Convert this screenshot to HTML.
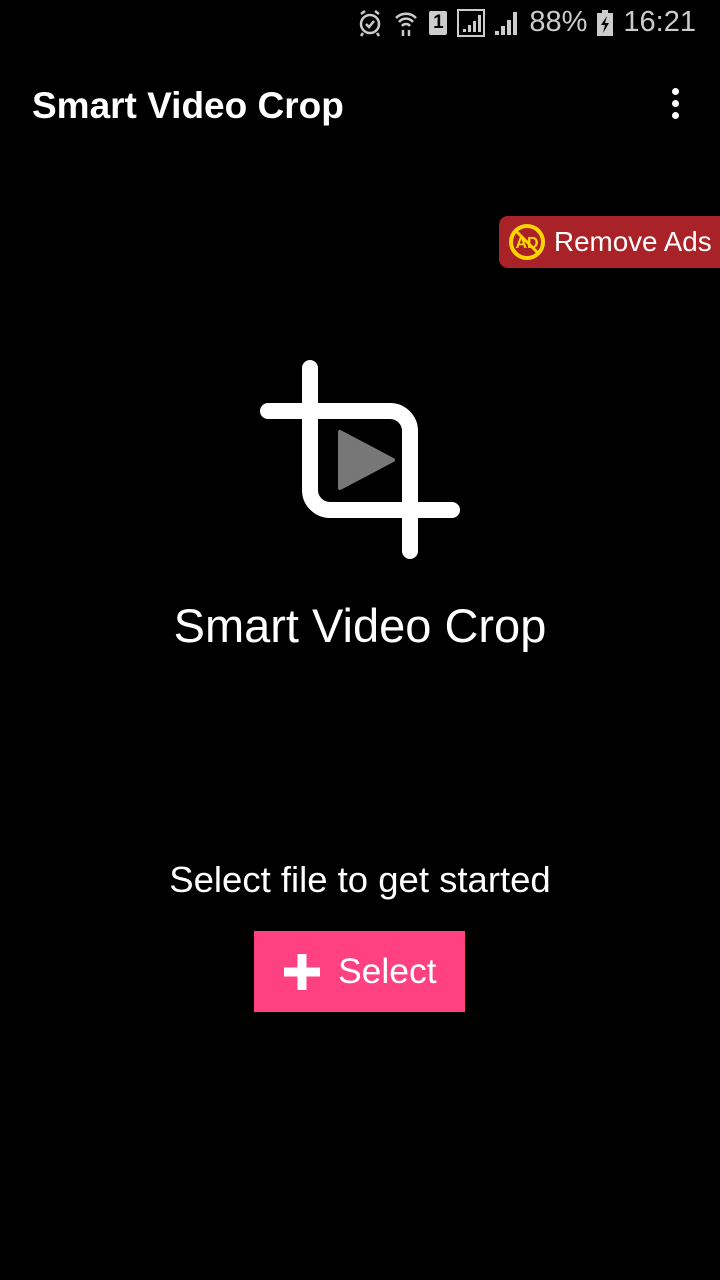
<!DOCTYPE html>
<html><head><style>
body{margin:0;width:720px;height:1280px;background:#000;overflow:hidden;font-family:"Liberation Sans",sans-serif;color:#fff;position:relative}
.abs{position:absolute}
</style></head><body>
<div class="abs" style="right:24px;top:6px;font-size:29px;color:#ccc;display:flex;align-items:center;gap:10px">
<svg width="26" height="28" viewBox="0 0 26 28" fill="none" stroke="#ccc" stroke-width="2.5"><circle cx="13" cy="15" r="9"/><path d="M9 15l3 3 5-6M4 5l4-3M22 5l-4-3M6 24l-2 3M20 24l2 3"/></svg>
<svg width="26" height="28" viewBox="0 0 26 28" fill="none" stroke="#ccc" stroke-width="2.5"><path d="M3 9a14 14 0 0 1 20 0M6 13a9 9 0 0 1 14 0M9 17a5 5 0 0 1 8 0M10 21v6M16 27v-6"/></svg>
<div style="width:18px;height:24px;background:#ccc;border-radius:2px;color:#000;font-size:19px;font-weight:bold;text-align:center;line-height:24px">1</div>
<svg width="28" height="28" viewBox="0 0 28 28"><rect x="1" y="1" width="26" height="26" fill="none" stroke="#ccc" stroke-width="2"/><path d="M6 23h3v-3H6zM11 23h3v-7h-3zM16 23h3v-11h-3zM21 23h3V6h-3z" fill="#ccc"/></svg>
<svg width="24" height="24" viewBox="0 0 24 24" fill="#ccc"><path d="M0 24h4v-4H0zM6 24h4v-9H6zM12 24h4V9h-4zM18 24h4V1h-4z"/></svg>
<span>88%</span>
<svg width="16" height="26" viewBox="0 0 16 26"><rect x="5" y="0" width="6" height="3" fill="#ccc"/><rect x="0" y="3" width="16" height="23" fill="#ccc"/><path d="M10 6L4 15h4l-2 8 6-10H8z" fill="#000"/></svg>
<span>16:21</span>
</div>
<div class="abs" style="left:32px;top:85px;font-size:37px;font-weight:bold">Smart Video Crop</div>
<div class="abs" style="left:672px;top:88px;width:8px">
<div style="width:7px;height:7px;border-radius:50%;background:#fff;margin-bottom:5px"></div>
<div style="width:7px;height:7px;border-radius:50%;background:#fff;margin-bottom:5px"></div>
<div style="width:7px;height:7px;border-radius:50%;background:#fff"></div></div>
<div class="abs" style="left:499px;top:216px;width:240px;height:52px;background:#a92227;border-radius:9px;display:flex;align-items:center">
<svg style="margin-left:8px" width="40" height="40" viewBox="0 0 40 40"><circle cx="20" cy="20" r="16" fill="none" stroke="#ffd400" stroke-width="4"/><text x="20" y="26" font-size="16" font-weight="bold" fill="#ffd400" text-anchor="middle" font-family="Liberation Sans">AD</text><path d="M9 9l22 22" stroke="#ffd400" stroke-width="3"/></svg>
<span style="font-size:27.8px;margin-left:7px">Remove Ads</span></div>
<svg class="abs" style="left:0;top:0" width="720" height="600">
<g fill="none" stroke="#fff" stroke-width="16" stroke-linecap="round" stroke-linejoin="round">
<path d="M310 368V490a20 20 0 0 0 20 20H452"/>
<path d="M268 411H390a20 20 0 0 1 20 20V551"/>
</g>
<path d="M340 432v56l53-28z" fill="#777" stroke="#777" stroke-width="4" stroke-linejoin="round"/>
</svg>
<div class="abs" style="left:0;width:720px;top:598px;text-align:center;font-size:47px">Smart Video Crop</div>
<div class="abs" style="left:0;width:720px;top:859px;text-align:center;font-size:36.5px">Select file to get started</div>
<div class="abs" style="left:254px;top:931px;width:211px;height:81px;background:#ff4081;display:flex;align-items:center">
<svg style="margin-left:28px" width="40" height="40" viewBox="0 0 40 40"><path d="M20 2v36M2 20h36" stroke="#fff" stroke-width="9"/></svg>
<span style="font-size:35.5px;margin-left:16px">Select</span></div>
</body></html>
